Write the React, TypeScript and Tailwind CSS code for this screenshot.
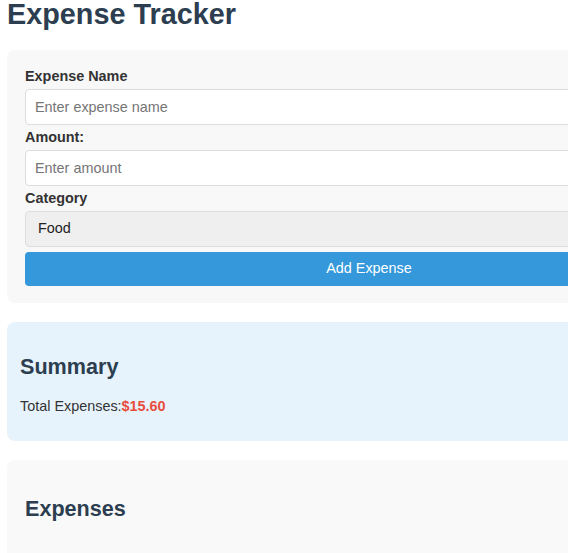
import React from "react";

export default function App() {
  return (
    <div className="w-[568px] h-[553px] overflow-hidden bg-white font-['Liberation_Sans',Arial,sans-serif]">
      <div className="w-[724px] ml-[7px] pt-px">
        <h1 className="text-[28.8px] leading-[33px] font-bold text-[#2c3e50] h-[52px] mt-[-3px] mb-0">
          Expense Tracker
        </h1>

        <div className="bg-[#f8f8f8] rounded-[8px] pt-[18px] pb-[17px] px-[18px] flex flex-col">
          <label className="text-[14.4px] leading-[16px] font-bold text-[#333] mb-[5px]">
            Expense Name
          </label>
          <input
            type="text"
            placeholder="Enter expense name"
            className="h-[36px] mb-[4px] bg-white border border-[#dddddd] rounded-[4px] pl-[9px] text-[14.4px] text-[#333] placeholder:text-[#757575] outline-none"
          />
          <label className="text-[14.4px] leading-[16px] font-bold text-[#333] mb-[5px]">
            Amount:
          </label>
          <input
            type="text"
            placeholder="Enter amount"
            className="h-[36px] mb-[4px] bg-white border border-[#dddddd] rounded-[4px] pl-[9px] text-[14.4px] text-[#333] placeholder:text-[#757575] outline-none"
          />
          <label className="text-[14.4px] leading-[17px] font-bold text-[#333] mb-[4px]">
            Category
          </label>
          <select
            defaultValue="Food"
            className="h-[36px] mb-[5px] appearance-none bg-[#efefef] border border-[#dddddd] rounded-[4px] pl-[12px] text-[14.4px] text-[#222] outline-none"
          >
            <option>Food</option>
            <option>Transport</option>
            <option>Entertainment</option>
            <option>Other</option>
          </select>
          <button className="h-[34px] bg-[#3498db] text-white text-[14.4px] rounded-[4px]">
            Add Expense
          </button>
        </div>

        <div className="mt-[19px] bg-[#e7f3fc] rounded-[8px] px-[13px] pt-[13px] pb-[13px]">
          <h2 className="mt-[19px] text-[21.6px] leading-[25px] font-bold text-[#2c3e50]">
            Summary
          </h2>
          <p className="mt-[19px] mb-[14px] text-[14.4px] leading-[16px] text-[#333]">
            Total Expenses:<span className="font-bold text-[#e74c3c]">$15.60</span>
          </p>
        </div>

        <div className="mt-[19px] bg-[#f9f9f9] rounded-[8px] px-[18px] pt-[18px] pb-[18px] h-[200px]">
          <h2 className="mt-[18px] text-[21.6px] leading-[25px] font-bold text-[#2c3e50]">
            Expenses
          </h2>
        </div>
      </div>
    </div>
  );
}
